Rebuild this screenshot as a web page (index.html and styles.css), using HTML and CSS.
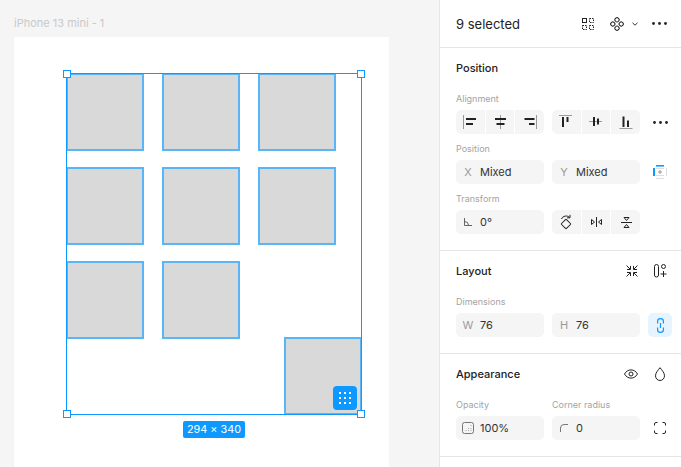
FILE: index.html
```html
<!DOCTYPE html>
<html lang="en">
<head>
<meta charset="utf-8">
<title>iPhone 13 mini - 1</title>
<link rel="stylesheet" href="styles.css">
</head>
<body>
<div class="app">
  <main class="canvas">
    <div class="frame-name">iPhone 13 mini - 1</div>
    <div class="frame"></div>
    <div class="shapes">
      <div class="sq"></div><div class="sq"></div><div class="sq"></div>
      <div class="sq"></div><div class="sq"></div><div class="sq"></div>
      <div class="sq"></div><div class="sq"></div>
    </div>
    <div class="sq sq-last"></div>
    <div class="selection"></div>
    <span class="handle h-tl"></span><span class="handle h-tr"></span>
    <span class="handle h-bl"></span><span class="handle h-br"></span>
    <div class="grid-badge">
      <svg width="12" height="12" viewBox="0 0 12 12" fill="#fff"><rect x="0" y="0" width="2" height="2"/><rect x="5" y="0" width="2" height="2"/><rect x="10" y="0" width="2" height="2"/><rect x="0" y="5" width="2" height="2"/><rect x="5" y="5" width="2" height="2"/><rect x="10" y="5" width="2" height="2"/><rect x="0" y="10" width="2" height="2"/><rect x="5" y="10" width="2" height="2"/><rect x="10" y="10" width="2" height="2"/></svg>
    </div>
    <div class="size-badge">294 × 340</div>
  </main>

  <aside class="panel">
    <header class="panel-head">
      <span class="selected">9 selected</span>
      <div class="head-icons">
        <svg width="14" height="14" viewBox="0 0 14 14" fill="none" stroke="#222"><rect x="1.500" y="1.500" width="4" height="4"/><rect x="8.500" y="1.500" width="4" height="4" stroke-dasharray="1.500 1"/><rect x="1.500" y="8.500" width="4" height="4" stroke-dasharray="1.500 1"/><rect x="8.500" y="8.500" width="4" height="4" stroke-dasharray="1.500 1"/></svg>
        <span class="comp">
          <svg width="14" height="14" viewBox="0 0 14 14" fill="none" stroke="#222"><rect x="5" y=".8" width="4" height="4" rx="1.600" transform="rotate(45 7 2.800)"/><rect x="5" y="9.200" width="4" height="4" rx="1.600" transform="rotate(45 7 11.200)"/><rect x=".8" y="5" width="4" height="4" rx="1.600" transform="rotate(45 2.800 7)"/><rect x="9.200" y="5" width="4" height="4" rx="1.600" transform="rotate(45 11.200 7)"/></svg>
          <svg width="6" height="4" viewBox="0 0 6 4" fill="none" stroke="#333"><path d="M.5.8 3 3.200 5.500.8"/></svg>
        </span>
        <svg class="dots" width="15" height="3" viewBox="0 0 15 3" fill="#222"><circle cx="1.500" cy="1.500" r="1.400"/><circle cx="7.500" cy="1.500" r="1.400"/><circle cx="13.500" cy="1.500" r="1.400"/></svg>
      </div>
    </header>

    <section class="section">
      <h2 class="title">Position</h2>
      <div class="group">
        <div class="label">Alignment</div>
        <div class="row">
          <div class="seg">
            <span class="seg-btn"><svg width="14" height="14" viewBox="0 0 14 14" fill="none" stroke="#222"><path d="M.5 0v14" stroke="#999"/><path d="M3 4h10M3 9h7" stroke-width="2"/></svg></span>
            <span class="seg-btn"><svg width="14" height="14" viewBox="0 0 14 14" fill="none" stroke="#222"><path d="M7.500 0v14" stroke="#999"/><path d="M2 4h11M3.500 9h8" stroke-width="2"/></svg></span>
            <span class="seg-btn"><svg width="14" height="14" viewBox="0 0 14 14" fill="none" stroke="#222"><path d="M13.500 0v14" stroke="#999"/><path d="M1.500 4h10M6 9h5.500" stroke-width="2"/></svg></span>
          </div>
          <div class="seg">
            <span class="seg-btn"><svg width="14" height="14" viewBox="0 0 14 14" fill="none" stroke="#222"><path d="M0 .5h13" stroke="#999"/><path d="M4 2v10M8.500 2v5" stroke-width="2"/></svg></span>
            <span class="seg-btn"><svg width="14" height="14" viewBox="0 0 14 14" fill="none" stroke="#222"><path d="M0 6.500h13" stroke="#999"/><path d="M5 2v9M9 3.500v6" stroke-width="2"/></svg></span>
            <span class="seg-btn"><svg width="14" height="14" viewBox="0 0 14 14" fill="none" stroke="#222"><path d="M.5 13.500h13" stroke="#999"/><path d="M4.500 1.500v10.500M9 5.500v6.500" stroke-width="2"/></svg></span>
          </div>
          <span class="side-icon"><svg class="dots" width="15" height="3" viewBox="0 0 15 3" fill="#222"><circle cx="1.500" cy="1.500" r="1.400"/><circle cx="7.500" cy="1.500" r="1.400"/><circle cx="13.500" cy="1.500" r="1.400"/></svg></span>
        </div>
      </div>
      <div class="group">
        <div class="label">Position</div>
        <div class="row">
          <div class="field"><span class="prefix">X</span><span class="val">Mixed</span></div>
          <div class="field"><span class="prefix">Y</span><span class="val">Mixed</span></div>
          <span class="side-icon"><svg width="14" height="14" viewBox="0 0 14 14" fill="none"><path d="M13.500 3v8" stroke="#ddd"/><path d="M3 13.500h8" stroke="#ddd"/><path d="M3 .8h8" stroke="#0d99ff" stroke-width="1.600"/><path d="M1 3v8" stroke="#0d99ff" stroke-width="2"/><path d="M3 3.500h8M3 10.500h8" stroke="#ddd"/><path d="M7 5v4M5 7h4" stroke="#999"/></svg></span>
        </div>
      </div>
      <div class="group">
        <div class="label">Transform</div>
        <div class="row">
          <div class="field"><span class="prefix"><svg width="8" height="8" viewBox="0 0 8 8" fill="none" stroke="#555"><path d="M.5 0v7.500H8M.5 3.500A4 4 0 0 1 4.500 7.500" stroke-width=".9"/></svg></span><span class="val">0°</span></div>
          <div class="seg">
            <span class="seg-btn"><svg width="14" height="16" viewBox="0 0 14 16" fill="none" stroke="#222"><rect x="3.500" y="6.500" width="7" height="7" transform="rotate(45 7 10)" rx=".7"/><path d="M2.500 5C3.500 1.800 8.500 1 10.700 3.500M11 .8v3H8"/></svg></span>
            <span class="seg-btn"><svg width="14" height="14" viewBox="0 0 14 14" fill="none" stroke="#222"><path d="M7.500 2v10"/><path d="M2.500 4.500v5L5.500 7zM12.500 4.500v5L9.500 7z"/></svg></span>
            <span class="seg-btn"><svg width="14" height="14" viewBox="0 0 14 14" fill="none" stroke="#222"><path d="M2 7.500h11"/><path d="M5 2.500h5L7.500 5.500zM5 12.500h5L7.500 9.500z"/></svg></span>
          </div>
        </div>
      </div>
    </section>

    <section class="section">
      <div class="title-row">
        <h2 class="title">Layout</h2>
        <div class="title-icons">
          <span class="icon-btn"><svg width="12" height="12" viewBox="0 0 12 12" fill="none" stroke="#222"><path d="M.5.500 4 4M1 4.500h3.500V1M11.500.500 8 4M11 4.500H7.500V1M.5 11.500 4 8M1 7.500h3.500V11M11.500 11.500 8 8M11 7.500H7.500V11"/></svg></span>
          <span class="icon-btn"><svg width="14" height="14" viewBox="0 0 14 14" fill="none" stroke="#222"><rect x="1.500" y=".5" width="4" height="12.500" rx="2"/><circle cx="10.500" cy="2.500" r="2"/><path d="M10.500 7v6M7.500 10h6"/></svg></span>
        </div>
      </div>
      <div class="group">
        <div class="label">Dimensions</div>
        <div class="row">
          <div class="field"><span class="prefix">W</span><span class="val">76</span></div>
          <div class="field"><span class="prefix">H</span><span class="val">76</span></div>
          <span class="link-btn"><svg width="7" height="15" viewBox="0 0 7 15" fill="none" stroke="#0d99ff" stroke-width="1.200"><path d="M.6 5.500V3a2.900 2.400 0 0 1 5.800 0v2.500M.6 9.500V12a2.900 2.400 0 0 0 5.800 0V9.500M3.500 5v5"/></svg></span>
        </div>
      </div>
    </section>

    <section class="section">
      <div class="title-row">
        <h2 class="title">Appearance</h2>
        <div class="title-icons">
          <span class="icon-btn"><svg width="16" height="10" viewBox="0 0 16 10" fill="none" stroke="#222"><path d="M.5 5C3.500-.5 10.500-.5 13.500 5 10.500 10.500 3.500 10.500.5 5z"/><circle cx="7" cy="5" r="2"/></svg></span>
          <span class="icon-btn"><svg width="12" height="14" viewBox="0 0 12 14" fill="none" stroke="#222"><path d="M6 .7C4 3.300 1.500 5.800 1.500 8.800a4.500 4.700 0 0 0 9 0C10.500 5.800 8 3.300 6 .7z"/></svg></span>
        </div>
      </div>
      <div class="row row-labels">
        <div class="label">Opacity</div>
        <div class="label">Corner radius</div>
      </div>
      <div class="row">
        <div class="field"><span class="prefix"><svg width="12" height="12" viewBox="0 0 12 12" fill="none" stroke="#777"><rect x=".5" y=".5" width="11" height="11" rx="2"/><path d="M9 3.500v.5M9 6v.5M9 8.500v.5M6.500 6v.5M6.500 8.500v.5M4 8.500v.5" stroke="#555"/></svg></span><span class="val">100%</span></div>
        <div class="field"><span class="prefix"><svg width="8" height="8" viewBox="0 0 8 8" fill="none" stroke="#777"><path d="M.5 8V4A3.500 3.500 0 0 1 4 .5h4"/></svg></span><span class="val">0</span></div>
        <span class="side-icon"><svg width="12" height="12" viewBox="0 0 12 12" fill="none" stroke="#222"><path d="M.5 3.500V2A1.500 1.500 0 0 1 2 .5h1.500M8.500 .5H10A1.500 1.500 0 0 1 11.500 2v1.500M.5 8.500V10A1.500 1.500 0 0 0 2 11.500h1.500M8.500 11.500H10a1.500 1.500 0 0 0 1.500-1.500V8.500"/></svg></span>
      </div>
    </section>
  </aside>
</div>
</body>
</html>
```

FILE: styles.css
```css
* { box-sizing: border-box; }
html, body { margin: 0; height: 100%; overflow: hidden; }
body { font-family: Inter, "Liberation Sans", sans-serif; color: #222; }
.app { display: flex; width: 681px; height: 467px; }

.canvas { position: relative; width: 440px; flex: none; background: #f5f5f5; border-right: 1px solid #e6e6e6; overflow: hidden; }
.frame-name { position: absolute; left: 14px; top: 16px; font-size: 11px; line-height: 14px; color: #c9c9c9; }
.frame { position: absolute; left: 14px; top: 37px; width: 375px; height: 430px; background: #fff; }
.shapes { position: absolute; left: 66px; top: 73px; display: grid; grid-template-columns: repeat(3, 78px); grid-auto-rows: 78px; column-gap: 18px; row-gap: 16px; }
.sq { width: 78px; height: 78px; background: #d9d9d9; border: 2px solid #5ab4f8; }
.sq-last { position: absolute; left: 284px; top: 337px; }
.selection { position: absolute; left: 66px; top: 73px; width: 296px; height: 342px; border: 1px solid #0d99ff; }
.handle { position: absolute; width: 8px; height: 8px; background: #fff; border: 1px solid #0d99ff; }
.h-tl { left: 63px; top: 70px; }
.h-tr { left: 357px; top: 70px; }
.h-bl { left: 63px; top: 410px; }
.h-br { left: 357px; top: 410px; }
.grid-badge { position: absolute; left: 333px; top: 386px; width: 24px; height: 24px; border-radius: 4px; background: #0d99ff; display: flex; align-items: center; justify-content: center; }
.size-badge { position: absolute; left: 183px; top: 421px; width: 62px; height: 17px; border-radius: 2px; background: #0d99ff; color: #fff; font-size: 10.800px; line-height: 17px; text-align: center; }

.panel { flex: 1; background: #fff; min-width: 0; }
.panel-head { height: 48px; border-bottom: 1px solid #e6e6e6; padding: 0 14px 0 16px; display: flex; align-items: center; justify-content: space-between; }
.selected { font-size: 13px; font-weight: 400; color: #222; }
.head-icons { display: flex; align-items: center; }
.comp { display: flex; align-items: center; gap: 8px; margin-left: 15px; }
.head-icons .dots { margin-left: 14px; }
.section { padding: 8px 0 16px 16px; border-bottom: 1px solid #e6e6e6; }
.title { margin: 0; font-size: 11px; font-weight: 450; line-height: 24px; height: 24px; color: #222; }
.title-row { display: flex; align-items: center; justify-content: space-between; height: 24px; padding-right: 9px; }
.title-icons { display: grid; grid-template-columns: 24px 24px; column-gap: 4px; }
.icon-btn { display: flex; align-items: center; justify-content: center; height: 24px; }
.group { margin-top: 12px; }
.group + .group { margin-top: 8px; }
.label { height: 14px; line-height: 14px; font-size: 9px; color: #a3a3a3; margin-bottom: 4px; }
.row { display: grid; grid-template-columns: 88px 88px 24px; column-gap: 8px; height: 24px; align-items: center; }
.row-labels { height: 18px; margin-top: 12px; align-items: start; }
.field { display: flex; align-items: center; height: 24px; background: #f5f5f5; border-radius: 5px; font-size: 11px; }
.prefix { width: 24px; flex: none; display: flex; justify-content: center; color: #999; }
.val { color: #333; }
.seg { display: grid; grid-template-columns: repeat(3, 1fr); column-gap: 1px; height: 24px; border-radius: 5px; overflow: hidden; }
.seg-btn { background: #f5f5f5; display: flex; align-items: center; justify-content: center; }
.side-icon { display: flex; align-items: center; justify-content: center; height: 24px; }
.link-btn { display: flex; align-items: center; justify-content: center; height: 24px; background: #e5f4ff; border-radius: 5px; }
```
